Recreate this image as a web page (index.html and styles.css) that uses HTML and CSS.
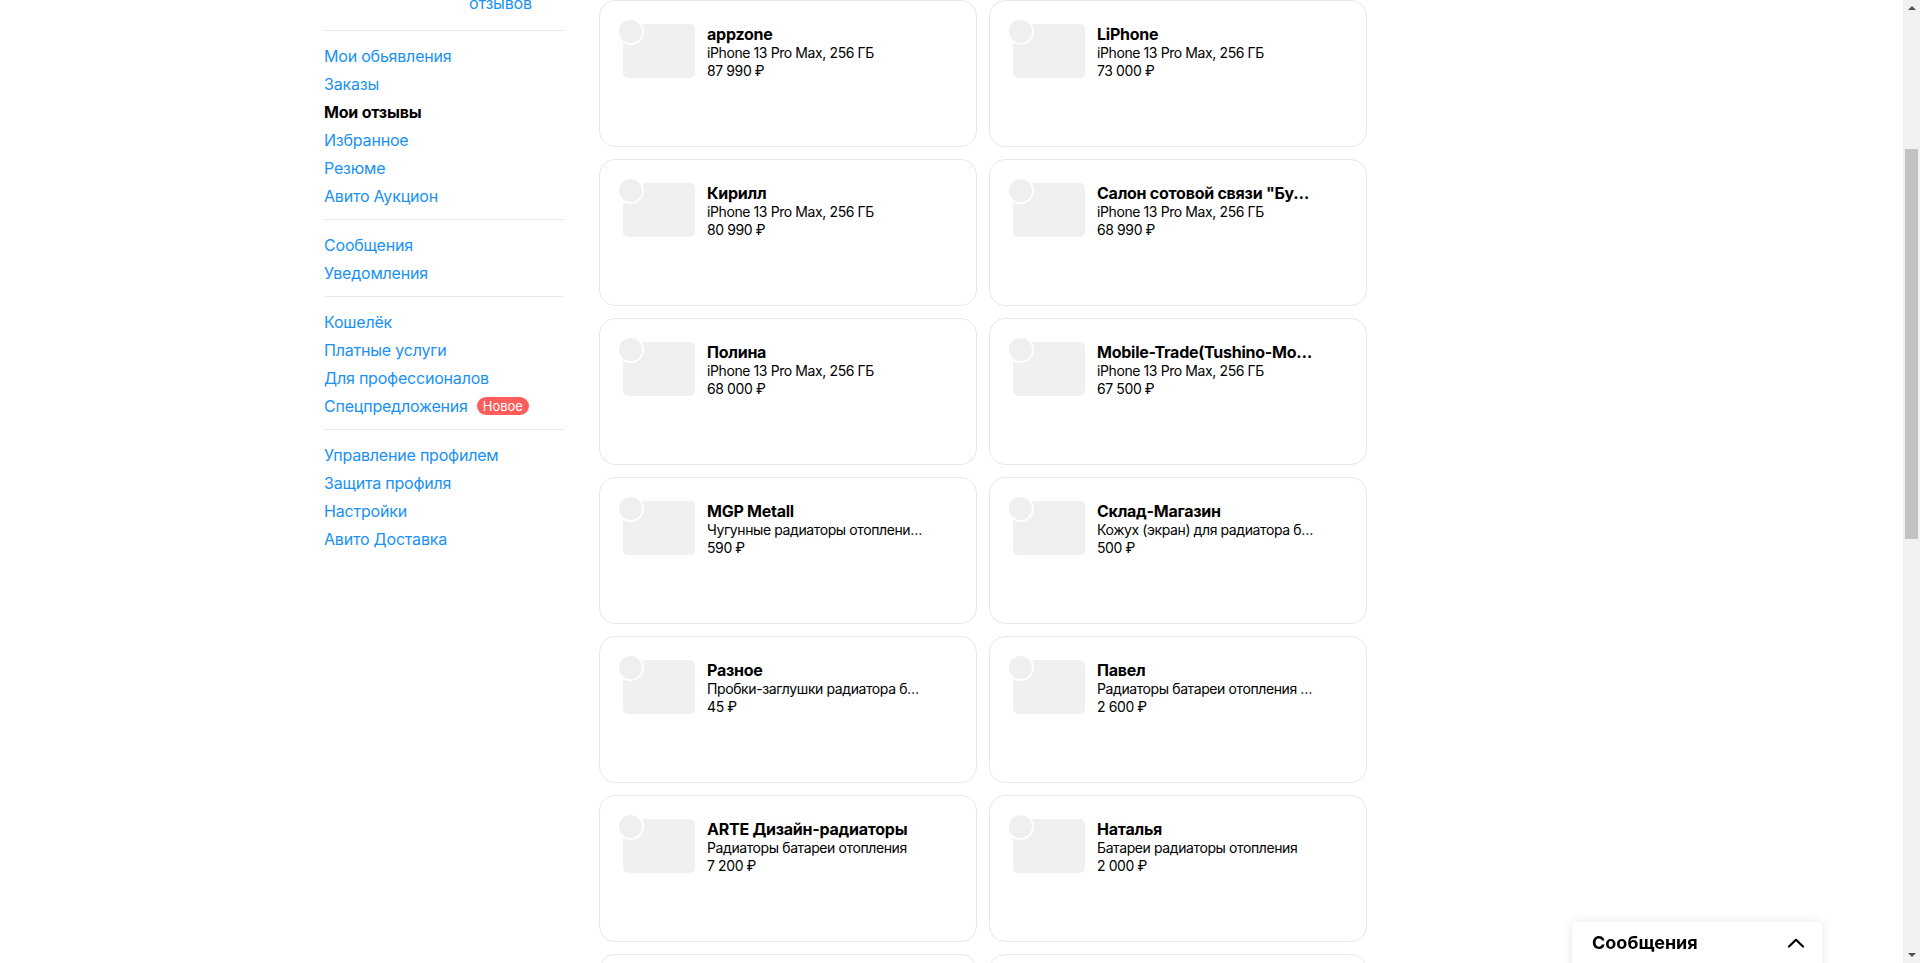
FILE: index.html
```html
<!DOCTYPE html>
<html lang="ru">
<head>
	<meta charset="utf-8">
	<title>Мои отзывы</title>
	<link rel="stylesheet" href="styles.css">
</head>
<body>

<div class="page">
	<aside class="sidebar">
		<div class="profile">
			<div class="profile-name">Александр</div>
			<div class="rating">
				<span class="rating-score">4,9 ★★★★★</span>
				<a class="rating-link" href="#">48<br>отзывов</a>
			</div>
		</div>
		<ul class="nav">
			<li><a href="#">Мои обьявления</a></li>
			<li><a href="#">Заказы</a></li>
			<li class="active">Мои отзывы</li>
			<li><a href="#">Избранное</a></li>
			<li><a href="#">Резюме</a></li>
			<li><a href="#">Авито Аукцион</a></li>
		</ul>
		<ul class="nav">
			<li><a href="#">Сообщения</a></li>
			<li><a href="#">Уведомления</a></li>
		</ul>
		<ul class="nav">
			<li><a href="#">Кошелёк</a></li>
			<li><a href="#">Платные услуги</a></li>
			<li><a href="#">Для профессионалов</a></li>
			<li><a href="#">Спецпредложения</a><span class="badge">Новое</span></li>
		</ul>
		<ul class="nav">
			<li><a href="#">Управление профилем</a></li>
			<li><a href="#">Защита профиля</a></li>
			<li><a href="#">Настройки</a></li>
			<li><a href="#">Авито Доставка</a></li>
		</ul>
	</aside>

	<main class="main">
		<div class="main-head">
			<h1>Мои отзывы</h1>
		</div>
		<div class="cards">
			<div class="card">
				<div class="thumb"></div>
				<div class="info">
					<div class="seller">appzone</div>
					<div class="item">iPhone 13 Pro Max, 256 ГБ</div>
					<div class="price">87 990 ₽</div>
				</div>
			</div>
			<div class="card">
				<div class="thumb"></div>
				<div class="info">
					<div class="seller">LiPhone</div>
					<div class="item">iPhone 13 Pro Max, 256 ГБ</div>
					<div class="price">73 000 ₽</div>
				</div>
			</div>
			<div class="card">
				<div class="thumb"></div>
				<div class="info">
					<div class="seller">Кирилл</div>
					<div class="item">iPhone 13 Pro Max, 256 ГБ</div>
					<div class="price">80 990 ₽</div>
				</div>
			</div>
			<div class="card">
				<div class="thumb"></div>
				<div class="info">
					<div class="seller">Салон сотовой связи "Будь на связи"</div>
					<div class="item">iPhone 13 Pro Max, 256 ГБ</div>
					<div class="price">68 990 ₽</div>
				</div>
			</div>
			<div class="card">
				<div class="thumb"></div>
				<div class="info">
					<div class="seller">Полина</div>
					<div class="item">iPhone 13 Pro Max, 256 ГБ</div>
					<div class="price">68 000 ₽</div>
				</div>
			</div>
			<div class="card">
				<div class="thumb"></div>
				<div class="info">
					<div class="seller">Mobile-Trade(Tushino-Mobile)</div>
					<div class="item">iPhone 13 Pro Max, 256 ГБ</div>
					<div class="price">67 500 ₽</div>
				</div>
			</div>
			<div class="card">
				<div class="thumb"></div>
				<div class="info">
					<div class="seller">MGP Metall</div>
					<div class="item">Чугунные радиаторы отопления МС-140</div>
					<div class="price">590 ₽</div>
				</div>
			</div>
			<div class="card">
				<div class="thumb"></div>
				<div class="info">
					<div class="seller">Склад-Магазин</div>
					<div class="item">Кожух (экран) для радиатора батареи</div>
					<div class="price">500 ₽</div>
				</div>
			</div>
			<div class="card">
				<div class="thumb"></div>
				<div class="info">
					<div class="seller">Разное</div>
					<div class="item">Пробки-заглушки радиатора батареи</div>
					<div class="price">45 ₽</div>
				</div>
			</div>
			<div class="card">
				<div class="thumb"></div>
				<div class="info">
					<div class="seller">Павел</div>
					<div class="item">Радиаторы батареи отопления чугунные</div>
					<div class="price">2 600 ₽</div>
				</div>
			</div>
			<div class="card">
				<div class="thumb"></div>
				<div class="info">
					<div class="seller">ARTE Дизайн-радиаторы</div>
					<div class="item">Радиаторы батареи отопления</div>
					<div class="price">7 200 ₽</div>
				</div>
			</div>
			<div class="card">
				<div class="thumb"></div>
				<div class="info">
					<div class="seller">Наталья</div>
					<div class="item">Батареи радиаторы отопления</div>
					<div class="price">2 000 ₽</div>
				</div>
			</div>
			<div class="card">
				<div class="thumb"></div>
				<div class="info">
					<div class="seller">Сантехника</div>
					<div class="item">Радиатор биметаллический</div>
					<div class="price">3 400 ₽</div>
				</div>
			</div>
			<div class="card">
				<div class="thumb"></div>
				<div class="info">
					<div class="seller">Михаил</div>
					<div class="item">Радиатор отопления</div>
					<div class="price">1 500 ₽</div>
				</div>
			</div>
		</div>
	</main>
</div>

<div class="messenger">
	<span class="messenger-title">Сообщения</span>
	<svg class="messenger-toggle" width="18" height="10" viewBox="0 0 18 10">
		<polyline points="2,8.5 9,1.8 16,8.5" fill="none" stroke="#000" stroke-width="2.2" stroke-linecap="round" stroke-linejoin="round"/>
	</svg>
</div>

<div class="scrollbar">
	<div class="scroll-arrow up"></div>
	<div class="scroll-thumb"></div>
	<div class="scroll-arrow down"></div>
</div>

</body>
</html>
```

FILE: styles.css
```css
* {
	margin: 0;
	padding: 0;
	box-sizing: border-box;
}
html {
	overflow: hidden;
}
body {
	background: #fff;
	color: #000;
	font-family: Inter, "Noto Sans", sans-serif;
}
a {
	color: #1991f5;
	text-decoration: none;
}

/* page is scrolled down a bit, so the header sits above the top edge */
.page {
	display: flex;
	gap: 35px;
	padding-left: 324px;
	margin-top: -96px;
}

.sidebar {
	width: 240px;
	flex-shrink: 0;
}
.profile {
	padding: 30px 0 16px;
}
.profile-name {
	font-size: 22px;
	font-weight: 700;
	line-height: 28px;
	margin-bottom: 8px;
}
.rating {
	display: flex;
	font-size: 16px;
	line-height: 22px;
	letter-spacing: -0.2px;
}
.rating-score {
	width: 145px;
	color: #000;
}
.nav {
	list-style: none;
	border-top: 1px solid #e8e8e8;
	padding: 10px 0;
}
.nav li {
	display: flex;
	align-items: center;
	height: 28px;
	padding-top: 2px;
	font-size: 16px;
	letter-spacing: -0.2px;
}
.nav li.active {
	font-weight: 700;
}
.badge {
	margin-left: 9px;
	height: 18px;
	line-height: 18px;
	padding: 0 6px;
	border-radius: 9px;
	background: #ff5c5c;
	color: #fff;
	font-size: 13px;
	letter-spacing: 0;
}

.main {
	width: 768px;
}
.main-head {
	height: 96px;
	display: flex;
	align-items: center;
}
.main-head h1 {
	font-size: 28px;
}
.cards {
	display: grid;
	grid-template-columns: repeat(2, 378px);
	gap: 12px;
}
.card {
	height: 147px;
	border: 1px solid #e8e8e8;
	border-radius: 16px;
	padding: 23px;
	display: flex;
	gap: 12px;
}
.thumb {
	position: relative;
	width: 72px;
	height: 54px;
	flex-shrink: 0;
	background: #f0f0f0;
	border-radius: 5px;
}
.thumb::before {
	content: "";
	position: absolute;
	left: -6px;
	top: -6px;
	width: 23px;
	height: 23px;
	border-radius: 50%;
	background: #efefef;
	border: 2px solid #fff;
}
.info {
	width: 219px;
	min-width: 0;
}
.info div {
	white-space: nowrap;
	overflow: hidden;
	text-overflow: ellipsis;
}
.seller {
	font-size: 16px;
	font-weight: 700;
	line-height: 20px;
	letter-spacing: -0.25px;
}
.item,
.price {
	font-size: 14px;
	line-height: 18px;
	letter-spacing: -0.4px;
}

/* messenger popup pinned to the bottom right */
.messenger {
	position: fixed;
	left: 1572px;
	bottom: -10px;
	width: 250px;
	height: 51px;
	padding: 0 17px 10px 20px;
	display: flex;
	align-items: center;
	justify-content: space-between;
	background: #fff;
	border-radius: 5px;
	box-shadow: 0 0 12px rgba(0, 0, 0, .1);
}
.messenger-title {
	font-size: 18px;
	font-weight: 700;
}

/* window scrollbar */
.scrollbar {
	position: fixed;
	top: 0;
	right: 0;
	bottom: 0;
	width: 17px;
	background: #f1f1f1;
}
.scroll-thumb {
	position: absolute;
	left: 2px;
	right: 2px;
	top: 149px;
	height: 390px;
	background: #c1c1c1;
}
.scroll-arrow {
	position: absolute;
	left: 5px;
	width: 0;
	height: 0;
	border-left: 4px solid transparent;
	border-right: 4px solid transparent;
}
.scroll-arrow.up {
	top: 6px;
	border-bottom: 4px solid #505050;
}
.scroll-arrow.down {
	bottom: 6px;
	border-top: 4px solid #505050;
}
```
